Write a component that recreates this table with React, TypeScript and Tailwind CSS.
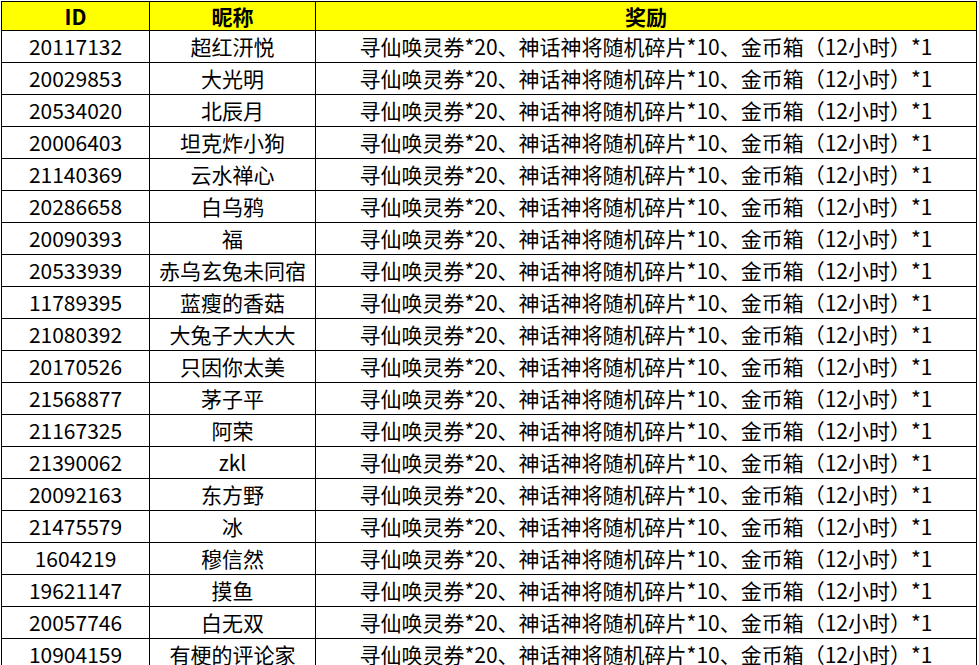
// Reward list table — yellow header, plain bordered rows.

const REWARD = '寻仙唤灵券*20、神话神将随机碎片*10、金币箱（12小时）*1';

const rows: [string, string][] = [
  ['20117132', '超红汧悦'],
  ['20029853', '大光明'],
  ['20534020', '北辰月'],
  ['20006403', '坦克炸小狗'],
  ['21140369', '云水禅心'],
  ['20286658', '白乌鸦'],
  ['20090393', '福'],
  ['20533939', '赤乌玄兔未同宿'],
  ['11789395', '蓝瘦的香菇'],
  ['21080392', '大兔子大大大'],
  ['20170526', '只因你太美'],
  ['21568877', '茅子平'],
  ['21167325', '阿荣'],
  ['21390062', 'zkl'],
  ['20092163', '东方野'],
  ['21475579', '冰'],
  ['1604219', '穆信然'],
  ['19621147', '摸鱼'],
  ['20057746', '白无双'],
  ['10904159', '有梗的评论家'],
];

const cell = 'flex items-center justify-center border-r border-black leading-none whitespace-nowrap';

export default function App() {
  return (
    <div className="w-[979px] h-[665px] overflow-hidden bg-white pl-px pt-px font-['Noto_Sans_CJK_SC','Noto_Sans',sans-serif] text-[21px] text-black">
      <div className="w-[976px] border-l border-t border-black">
        {/* Header */}
        <div className="grid grid-cols-[148px_166px_661px] border-b border-black bg-[#ffff00] font-bold">
          <div className={`${cell} h-[28px]`}>ID</div>
          <div className={`${cell} h-[28px]`}>昵称</div>
          <div className={`${cell} h-[28px]`}>奖励</div>
        </div>

        {rows.map(([id, name]) => (
          <div key={id} className="grid grid-cols-[148px_166px_661px] border-b border-black">
            <div className={`${cell} h-[31px]`}>{id}</div>
            <div className={`${cell} h-[31px]`}>{name}</div>
            <div className={`${cell} h-[31px]`}>{REWARD}</div>
          </div>
        ))}
      </div>
    </div>
  );
}
